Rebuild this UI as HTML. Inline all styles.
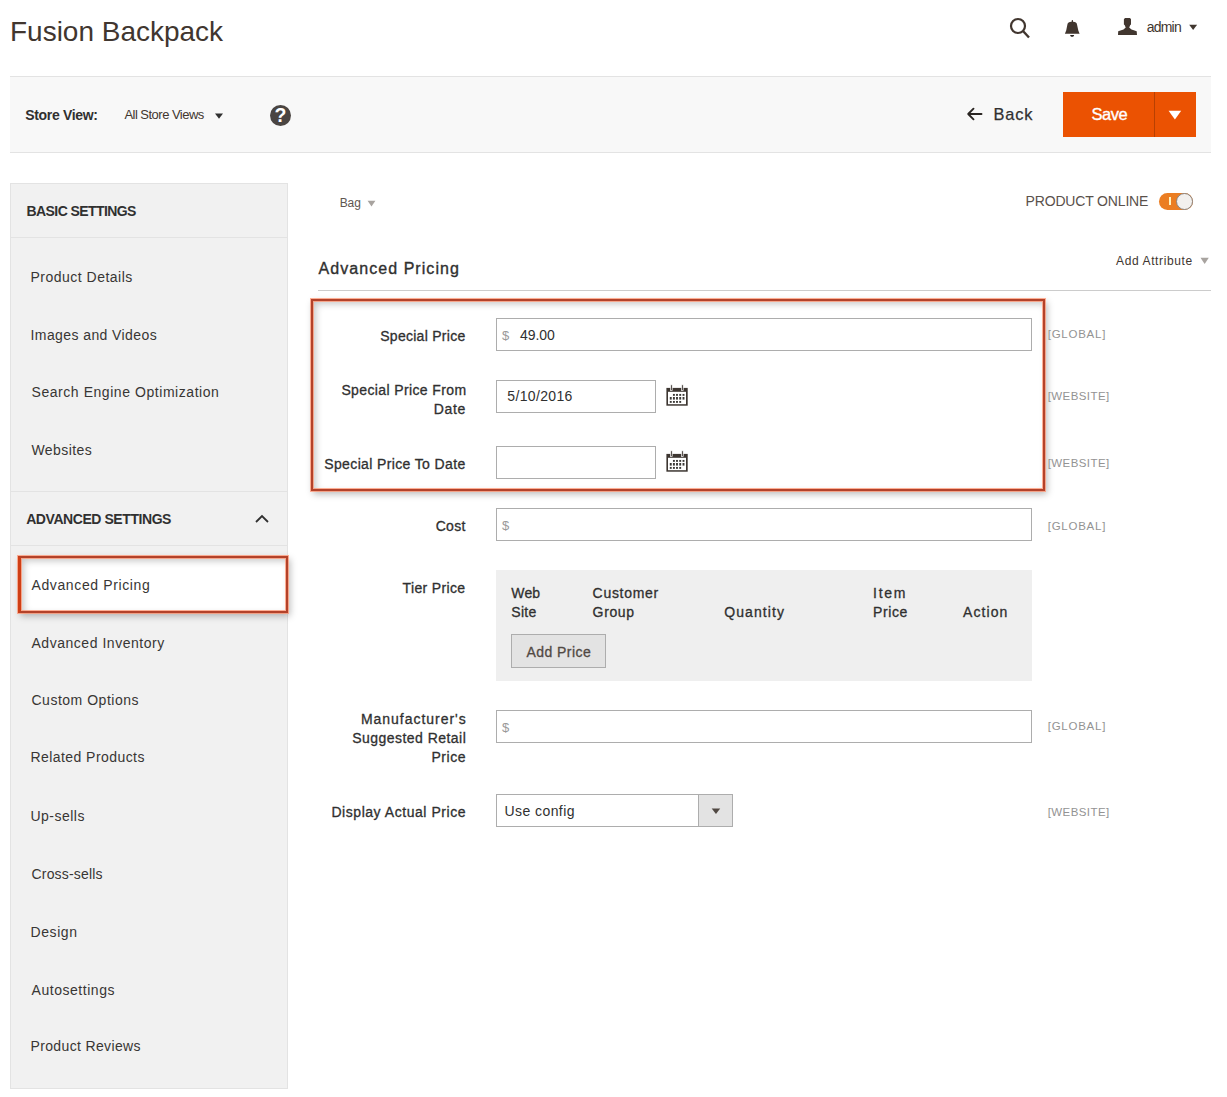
<!DOCTYPE html>
<html><head><meta charset="utf-8"><title>Fusion Backpack</title>
<style>
html,body{margin:0;padding:0;background:#fff;width:1227px;height:1097px;overflow:hidden;position:relative}
body{font-family:"Liberation Sans",sans-serif;}
div{line-height:0;white-space:nowrap}
</style></head><body>
<div style="position:absolute;left:10px;top:32.10px;font-size:28px;font-weight:400;color:#41362f;letter-spacing:-0.015px;">Fusion Backpack</div>
<svg style="position:absolute;left:1006px;top:15px" width="28" height="26" viewBox="0 0 28 26"><circle cx="12" cy="11" r="7" fill="none" stroke="#41362f" stroke-width="2.2"/><line x1="17" y1="16" x2="23" y2="22.5" stroke="#41362f" stroke-width="2.4"/></svg>
<svg style="position:absolute;left:1058px;top:14px" width="28" height="26" viewBox="0 0 28 26"><path d="M13.6 7.8 L13.9 5.9 L14.8 5.9 L15.1 7.8 C17.5 8 18.8 8.6 19 10.5 L20.3 16.5 L21.6 19.7 L6.9 19.7 L8.2 16.5 L9.4 10.5 C9.7 8.6 11 8 13.6 7.8 Z" fill="#41362f"/><path d="M12.1 20.9 L16.1 20.9 C15.8 22.3 15 22.8 14.1 22.8 C13.2 22.8 12.4 22.3 12.1 20.9 Z" fill="#2a2420"/></svg>
<svg style="position:absolute;left:1114px;top:14px" width="28" height="26" viewBox="0 0 28 26"><path d="M11 4 L16 4 L17 5.2 L17 10.4 L16.3 11 L15.2 13.6 L17.5 15.5 L20.5 16.5 L22.7 17.2 L23 20.9 L4 20.9 L4.2 17.2 L6.5 16.5 L9.5 15.5 L11.7 13.6 L10.6 11 L9.9 10.4 L9.9 5.2 Z" fill="#41362f"/></svg>
<div style="position:absolute;left:1146.7px;top:27.15px;font-size:14px;font-weight:400;color:#41362f;letter-spacing:-0.786px;">admin</div>
<div style="position:absolute;left:10px;top:76px;width:1201px;height:1px;background:#e3e3e3"></div>
<div style="position:absolute;left:10px;top:77px;width:1201px;height:75px;background:#f8f8f8"></div>
<div style="position:absolute;left:10px;top:152px;width:1201px;height:1px;background:#e3e3e3"></div>
<div style="position:absolute;left:25.3px;top:114.75px;font-size:14px;font-weight:700;color:#303030;letter-spacing:-0.343px;">Store View:</div>
<div style="position:absolute;left:124.4px;top:115.40px;font-size:13px;font-weight:400;color:#41362f;letter-spacing:-0.52px;">All Store Views</div>
<div style="position:absolute;left:270px;top:105px;width:21px;height:21px;border-radius:50%;background:#4a4542"></div>
<div style="position:absolute;left:270.5px;width:20px;text-align:center;top:115.3px;font-size:19.5px;font-weight:700;color:#fff">?</div>
<svg style="position:absolute;left:965px;top:106px" width="18" height="16" viewBox="0 0 18 16"><path d="M16.5 8 H3.2 M8.5 2.7 L3.2 8 L8.5 13.3" fill="none" stroke="#2a2522" stroke-width="1.9" stroke-linecap="round" stroke-linejoin="round"/></svg>
<div style="position:absolute;left:993.6px;top:114.02px;font-size:16.4px;font-weight:400;color:#303030;letter-spacing:0.786px;-webkit-text-stroke:0.25px #303030;">Back</div>
<div style="position:absolute;left:1063px;top:92px;width:133px;height:45px;background:#eb5202"></div>
<div style="position:absolute;left:1154px;top:92px;width:1px;height:45px;background:#b84002"></div>
<div style="position:absolute;left:1091.6px;top:114.08px;font-size:16.5px;font-weight:400;color:#ffffff;letter-spacing:-0.511px;-webkit-text-stroke:0.35px #fff;">Save</div>
<div style="position:absolute;left:10px;top:183px;width:278px;height:906px;background:#f1f1f1;border:1px solid #e3e3e3;box-sizing:border-box"></div>
<div style="position:absolute;left:11px;top:237px;width:276px;height:1px;background:#e3e3e3"></div>
<div style="position:absolute;left:26.5px;top:210.85px;font-size:14px;font-weight:700;color:#303030;letter-spacing:-0.578px;">BASIC SETTINGS</div>
<div style="position:absolute;left:30.5px;top:276.85px;font-size:14px;font-weight:400;color:#383634;letter-spacing:0.491px;">Product Details</div>
<div style="position:absolute;left:30.5px;top:334.85px;font-size:14px;font-weight:400;color:#383634;letter-spacing:0.412px;">Images and Videos</div>
<div style="position:absolute;left:31.5px;top:392.35px;font-size:14px;font-weight:400;color:#383634;letter-spacing:0.554px;">Search Engine Optimization</div>
<div style="position:absolute;left:31.5px;top:449.55px;font-size:14px;font-weight:400;color:#383634;letter-spacing:0.412px;">Websites</div>
<div style="position:absolute;left:11px;top:491px;width:276px;height:1px;background:#e3e3e3"></div>
<div style="position:absolute;left:26.2px;top:519.25px;font-size:14px;font-weight:700;color:#303030;letter-spacing:-0.435px;">ADVANCED SETTINGS</div>
<svg style="position:absolute;left:254px;top:513px" width="16" height="11" viewBox="0 0 16 11"><path d="M2 9 L8 3 L14 9" fill="none" stroke="#303030" stroke-width="1.8"/></svg>
<div style="position:absolute;left:11px;top:545px;width:276px;height:1px;background:#e3e3e3"></div>
<div style="position:absolute;left:17.5px;top:556px;width:270.5px;height:57px;background:#fff;border:2px solid #b3422a;box-sizing:border-box;box-shadow:0 0 0 1px rgba(255,150,115,.75), 2px 3px 7px rgba(0,0,0,.28), inset 0 0 0 1px rgba(255,150,115,.75), inset 3px 3px 7px rgba(0,0,0,.22);border-left:3px solid #cf3f16"></div>
<div style="position:absolute;left:31.5px;top:585.15px;font-size:14px;font-weight:400;color:#383634;letter-spacing:0.616px;">Advanced Pricing</div>
<div style="position:absolute;left:31.5px;top:642.85px;font-size:14px;font-weight:400;color:#383634;letter-spacing:0.527px;">Advanced Inventory</div>
<div style="position:absolute;left:31.5px;top:700.45px;font-size:14px;font-weight:400;color:#383634;letter-spacing:0.51px;">Custom Options</div>
<div style="position:absolute;left:30.5px;top:757.35px;font-size:14px;font-weight:400;color:#383634;letter-spacing:0.434px;">Related Products</div>
<div style="position:absolute;left:30.5px;top:815.55px;font-size:14px;font-weight:400;color:#383634;letter-spacing:0.476px;">Up-sells</div>
<div style="position:absolute;left:31.5px;top:873.95px;font-size:14px;font-weight:400;color:#383634;letter-spacing:0.177px;">Cross-sells</div>
<div style="position:absolute;left:30.5px;top:931.55px;font-size:14px;font-weight:400;color:#383634;letter-spacing:0.581px;">Design</div>
<div style="position:absolute;left:31.5px;top:989.75px;font-size:14px;font-weight:400;color:#383634;letter-spacing:0.541px;">Autosettings</div>
<div style="position:absolute;left:30.5px;top:1046.45px;font-size:14px;font-weight:400;color:#383634;letter-spacing:0.354px;">Product Reviews</div>
<div style="position:absolute;left:339.7px;top:202.54px;font-size:12px;font-weight:400;color:#5e5650;letter-spacing:-0.089px;">Bag</div>
<div style="position:absolute;left:1025.6px;top:201.15px;font-size:14px;font-weight:400;color:#5a514b;letter-spacing:-0.169px;">PRODUCT ONLINE</div>
<div style="position:absolute;left:1159px;top:193px;width:34px;height:17px;border-radius:9px;background:#eb7d22"></div>
<div style="position:absolute;left:1169px;top:197px;width:2px;height:8px;background:#fff3c0"></div>
<div style="position:absolute;left:1175.5px;top:193px;width:17px;height:17px;border-radius:50%;background:#f2f0ee;border:1px solid #8a8480;box-sizing:border-box"></div>
<div style="position:absolute;left:318.5px;top:268.96px;font-size:16px;font-weight:400;color:#303030;letter-spacing:1.059px;-webkit-text-stroke:0.35px #303030;">Advanced Pricing</div>
<div style="position:absolute;left:1116.1px;top:260.54px;font-size:12px;font-weight:400;color:#41362f;letter-spacing:0.608px;">Add Attribute</div>
<div style="position:absolute;left:318px;top:290px;width:893px;height:1px;background:#ccc"></div>
<div style="position:absolute;left:311px;top:299px;width:734px;height:192px;border:2px solid #b3422a;box-sizing:border-box;box-shadow:0 0 0 1px rgba(255,150,115,.75), 2px 3px 7px rgba(0,0,0,.28), inset 0 0 0 1px rgba(255,150,115,.75), inset 3px 3px 7px rgba(0,0,0,.22)"></div>
<div style="position:absolute;right:761.81px;text-align:right;top:336.35px;font-size:14px;font-weight:400;color:#303030;letter-spacing:0.274px;-webkit-text-stroke:0.3px #303030;margin-right:-0.274px;">Special Price</div>
<div style="position:absolute;left:496px;top:318px;width:536px;height:33px;background:#fff;border:1px solid #adadad;box-sizing:border-box"></div>
<div style="position:absolute;left:502px;top:335.50px;font-size:13px;font-weight:400;color:#999;letter-spacing:0px;">$</div>
<div style="position:absolute;left:520px;top:335.15px;font-size:14px;font-weight:400;color:#303030;letter-spacing:-0.062px;">49.00</div>
<div style="position:absolute;left:1047.7px;top:334.42px;font-size:11.5px;font-weight:400;color:#939393;letter-spacing:0.755px;">[GLOBAL]</div>
<div style="position:absolute;right:760.94px;text-align:right;top:390.15px;font-size:14px;font-weight:400;color:#303030;letter-spacing:0.377px;-webkit-text-stroke:0.3px #303030;margin-right:-0.377px;">Special Price From</div>
<div style="position:absolute;right:761.81px;text-align:right;top:409.15px;font-size:14px;font-weight:400;color:#303030;letter-spacing:0.638px;-webkit-text-stroke:0.3px #303030;margin-right:-0.638px;">Date</div>
<div style="position:absolute;left:496px;top:380px;width:160px;height:33px;background:#fff;border:1px solid #adadad;box-sizing:border-box"></div>
<div style="position:absolute;left:507.3px;top:396.15px;font-size:14px;font-weight:400;color:#303030;letter-spacing:0.35px;">5/10/2016</div>
<div style="position:absolute;left:1047.7px;top:396.02px;font-size:11.5px;font-weight:400;color:#939393;letter-spacing:0.419px;">[WEBSITE]</div>
<svg style="position:absolute;left:662px;top:380px" width="30" height="30" viewBox="0 0 30 30"><rect x="4.4" y="7.9" width="21.3" height="17.8" fill="#3d3631"/><rect x="6" y="11.8" width="18" height="12.4" fill="#fff"/><rect x="8.6" y="4.8" width="1.6" height="5.8" fill="#3d3631" stroke="#fff" stroke-width="0.7"/><rect x="19.6" y="4.8" width="1.6" height="5.8" fill="#3d3631" stroke="#fff" stroke-width="0.7"/><rect x="10.95" y="13.95" width="1.9" height="1.9" fill="#3a3835"/><rect x="14.05" y="13.95" width="1.9" height="1.9" fill="#3a3835"/><rect x="17.25" y="13.95" width="1.9" height="1.9" fill="#3a3835"/><rect x="20.55" y="13.95" width="1.9" height="1.9" fill="#3a3835"/><rect x="7.80" y="17.00" width="1.9" height="2.6" fill="#3a3835"/><rect x="10.95" y="17.00" width="1.9" height="2.6" fill="#3a3835"/><rect x="14.05" y="17.00" width="1.9" height="2.6" fill="#3a3835"/><rect x="17.25" y="17.00" width="1.9" height="2.6" fill="#3a3835"/><rect x="20.55" y="17.00" width="1.9" height="2.6" fill="#3a3835"/><rect x="7.80" y="20.95" width="1.9" height="1.9" fill="#3a3835"/><rect x="10.95" y="20.95" width="1.9" height="1.9" fill="#3a3835"/><rect x="14.05" y="20.95" width="1.9" height="1.9" fill="#3a3835"/><rect x="17.25" y="20.95" width="1.9" height="1.9" fill="#3a3835"/></svg>
<div style="position:absolute;right:761.81px;text-align:right;top:463.85px;font-size:14px;font-weight:400;color:#303030;letter-spacing:0.367px;-webkit-text-stroke:0.3px #303030;margin-right:-0.367px;">Special Price To Date</div>
<div style="position:absolute;left:496px;top:446px;width:160px;height:33px;background:#fff;border:1px solid #adadad;box-sizing:border-box"></div>
<div style="position:absolute;left:1047.7px;top:463.32px;font-size:11.5px;font-weight:400;color:#939393;letter-spacing:0.419px;">[WEBSITE]</div>
<svg style="position:absolute;left:662px;top:446px" width="30" height="30" viewBox="0 0 30 30"><rect x="4.4" y="7.9" width="21.3" height="17.8" fill="#3d3631"/><rect x="6" y="11.8" width="18" height="12.4" fill="#fff"/><rect x="8.6" y="4.8" width="1.6" height="5.8" fill="#3d3631" stroke="#fff" stroke-width="0.7"/><rect x="19.6" y="4.8" width="1.6" height="5.8" fill="#3d3631" stroke="#fff" stroke-width="0.7"/><rect x="10.95" y="13.95" width="1.9" height="1.9" fill="#3a3835"/><rect x="14.05" y="13.95" width="1.9" height="1.9" fill="#3a3835"/><rect x="17.25" y="13.95" width="1.9" height="1.9" fill="#3a3835"/><rect x="20.55" y="13.95" width="1.9" height="1.9" fill="#3a3835"/><rect x="7.80" y="17.00" width="1.9" height="2.6" fill="#3a3835"/><rect x="10.95" y="17.00" width="1.9" height="2.6" fill="#3a3835"/><rect x="14.05" y="17.00" width="1.9" height="2.6" fill="#3a3835"/><rect x="17.25" y="17.00" width="1.9" height="2.6" fill="#3a3835"/><rect x="20.55" y="17.00" width="1.9" height="2.6" fill="#3a3835"/><rect x="7.80" y="20.95" width="1.9" height="1.9" fill="#3a3835"/><rect x="10.95" y="20.95" width="1.9" height="1.9" fill="#3a3835"/><rect x="14.05" y="20.95" width="1.9" height="1.9" fill="#3a3835"/><rect x="17.25" y="20.95" width="1.9" height="1.9" fill="#3a3835"/></svg>
<div style="position:absolute;right:761.71px;text-align:right;top:525.75px;font-size:14px;font-weight:400;color:#303030;letter-spacing:0.268px;-webkit-text-stroke:0.3px #303030;margin-right:-0.268px;">Cost</div>
<div style="position:absolute;left:496px;top:508px;width:536px;height:33px;background:#fff;border:1px solid #adadad;box-sizing:border-box"></div>
<div style="position:absolute;left:502px;top:525.50px;font-size:13px;font-weight:400;color:#999;letter-spacing:0px;">$</div>
<div style="position:absolute;left:1047.7px;top:525.52px;font-size:11.5px;font-weight:400;color:#939393;letter-spacing:0.755px;">[GLOBAL]</div>
<div style="position:absolute;right:761.9100000000001px;text-align:right;top:587.95px;font-size:14px;font-weight:400;color:#303030;letter-spacing:0.345px;-webkit-text-stroke:0.3px #303030;margin-right:-0.345px;">Tier Price</div>
<div style="position:absolute;left:496px;top:570px;width:536px;height:111px;background:#efefef"></div>
<div style="position:absolute;left:511.3px;top:593.05px;font-size:14px;font-weight:400;color:#303030;letter-spacing:0.126px;-webkit-text-stroke:0.3px #303030;">Web</div>
<div style="position:absolute;left:511.3px;top:612.05px;font-size:14px;font-weight:400;color:#303030;letter-spacing:0.287px;-webkit-text-stroke:0.3px #303030;">Site</div>
<div style="position:absolute;left:592.6px;top:593.05px;font-size:14px;font-weight:400;color:#303030;letter-spacing:0.711px;-webkit-text-stroke:0.3px #303030;">Customer</div>
<div style="position:absolute;left:592.6px;top:612.05px;font-size:14px;font-weight:400;color:#303030;letter-spacing:0.644px;-webkit-text-stroke:0.3px #303030;">Group</div>
<div style="position:absolute;left:724.2px;top:612.15px;font-size:14px;font-weight:400;color:#303030;letter-spacing:1.109px;-webkit-text-stroke:0.3px #303030;">Quantity</div>
<div style="position:absolute;left:873px;top:593.05px;font-size:14px;font-weight:400;color:#303030;letter-spacing:1.745px;-webkit-text-stroke:0.3px #303030;">Item</div>
<div style="position:absolute;left:873px;top:612.05px;font-size:14px;font-weight:400;color:#303030;letter-spacing:0.622px;-webkit-text-stroke:0.3px #303030;">Price</div>
<div style="position:absolute;left:963px;top:612.15px;font-size:14px;font-weight:400;color:#303030;letter-spacing:1.095px;-webkit-text-stroke:0.3px #303030;">Action</div>
<div style="position:absolute;left:511px;top:634px;width:95px;height:34px;background:#e3e3e3;border:1px solid #adadad;box-sizing:border-box"></div>
<div style="position:absolute;left:526.4px;top:651.95px;font-size:14px;font-weight:400;color:#514943;letter-spacing:0.449px;-webkit-text-stroke:0.3px #514943;">Add Price</div>
<div style="position:absolute;right:761.3px;text-align:right;top:719.05px;font-size:14px;font-weight:400;color:#303030;letter-spacing:0.965px;-webkit-text-stroke:0.3px #303030;margin-right:-0.965px;">Manufacturer's</div>
<div style="position:absolute;right:761.19px;text-align:right;top:737.75px;font-size:14px;font-weight:400;color:#303030;letter-spacing:0.459px;-webkit-text-stroke:0.3px #303030;margin-right:-0.459px;">Suggested Retail</div>
<div style="position:absolute;right:761.51px;text-align:right;top:756.75px;font-size:14px;font-weight:400;color:#303030;letter-spacing:0.522px;-webkit-text-stroke:0.3px #303030;margin-right:-0.522px;">Price</div>
<div style="position:absolute;left:496px;top:710px;width:536px;height:33px;background:#fff;border:1px solid #adadad;box-sizing:border-box"></div>
<div style="position:absolute;left:502px;top:727.50px;font-size:13px;font-weight:400;color:#999;letter-spacing:0px;">$</div>
<div style="position:absolute;left:1047.7px;top:726.42px;font-size:11.5px;font-weight:400;color:#939393;letter-spacing:0.755px;">[GLOBAL]</div>
<div style="position:absolute;right:761.51px;text-align:right;top:812.15px;font-size:14px;font-weight:400;color:#303030;letter-spacing:0.542px;-webkit-text-stroke:0.3px #303030;margin-right:-0.542px;">Display Actual Price</div>
<div style="position:absolute;left:496px;top:794px;width:237px;height:33px;background:#fff;border:1px solid #adadad;box-sizing:border-box"></div>
<div style="position:absolute;left:698px;top:795px;width:34px;height:31px;background:#e3e3e3;border-left:1px solid #adadad;box-sizing:border-box"></div>
<div style="position:absolute;left:504.5px;top:811.15px;font-size:14px;font-weight:400;color:#303030;letter-spacing:0.427px;">Use config</div>
<div style="position:absolute;left:1047.7px;top:811.72px;font-size:11.5px;font-weight:400;color:#939393;letter-spacing:0.419px;">[WEBSITE]</div>
<svg style="position:absolute;left:1188px;top:23px" width="11" height="8"><polygon points="1.20,1.80 9.10,1.80 5.15,6.90" fill="#41362f"/></svg>
<svg style="position:absolute;left:214px;top:112px" width="11" height="8"><polygon points="1.00,1.60 9.00,1.60 5.00,6.80" fill="#303030"/></svg>
<svg style="position:absolute;left:366px;top:199px" width="11" height="9"><polygon points="1.60,1.80 9.40,1.80 5.50,7.40" fill="#a8a39f"/></svg>
<svg style="position:absolute;left:1199px;top:256px" width="11" height="10"><polygon points="1.50,1.70 9.80,1.70 5.65,8.10" fill="#a8a39f"/></svg>
<svg style="position:absolute;left:1167px;top:109px" width="16" height="12"><polygon points="1.60,1.80 14.20,1.80 7.90,10.60" fill="#ffffff"/></svg>
<svg style="position:absolute;left:710px;top:807px" width="12" height="9"><polygon points="1.70,1.40 10.20,1.40 5.95,7.10" fill="#514943"/></svg>
</body></html>
